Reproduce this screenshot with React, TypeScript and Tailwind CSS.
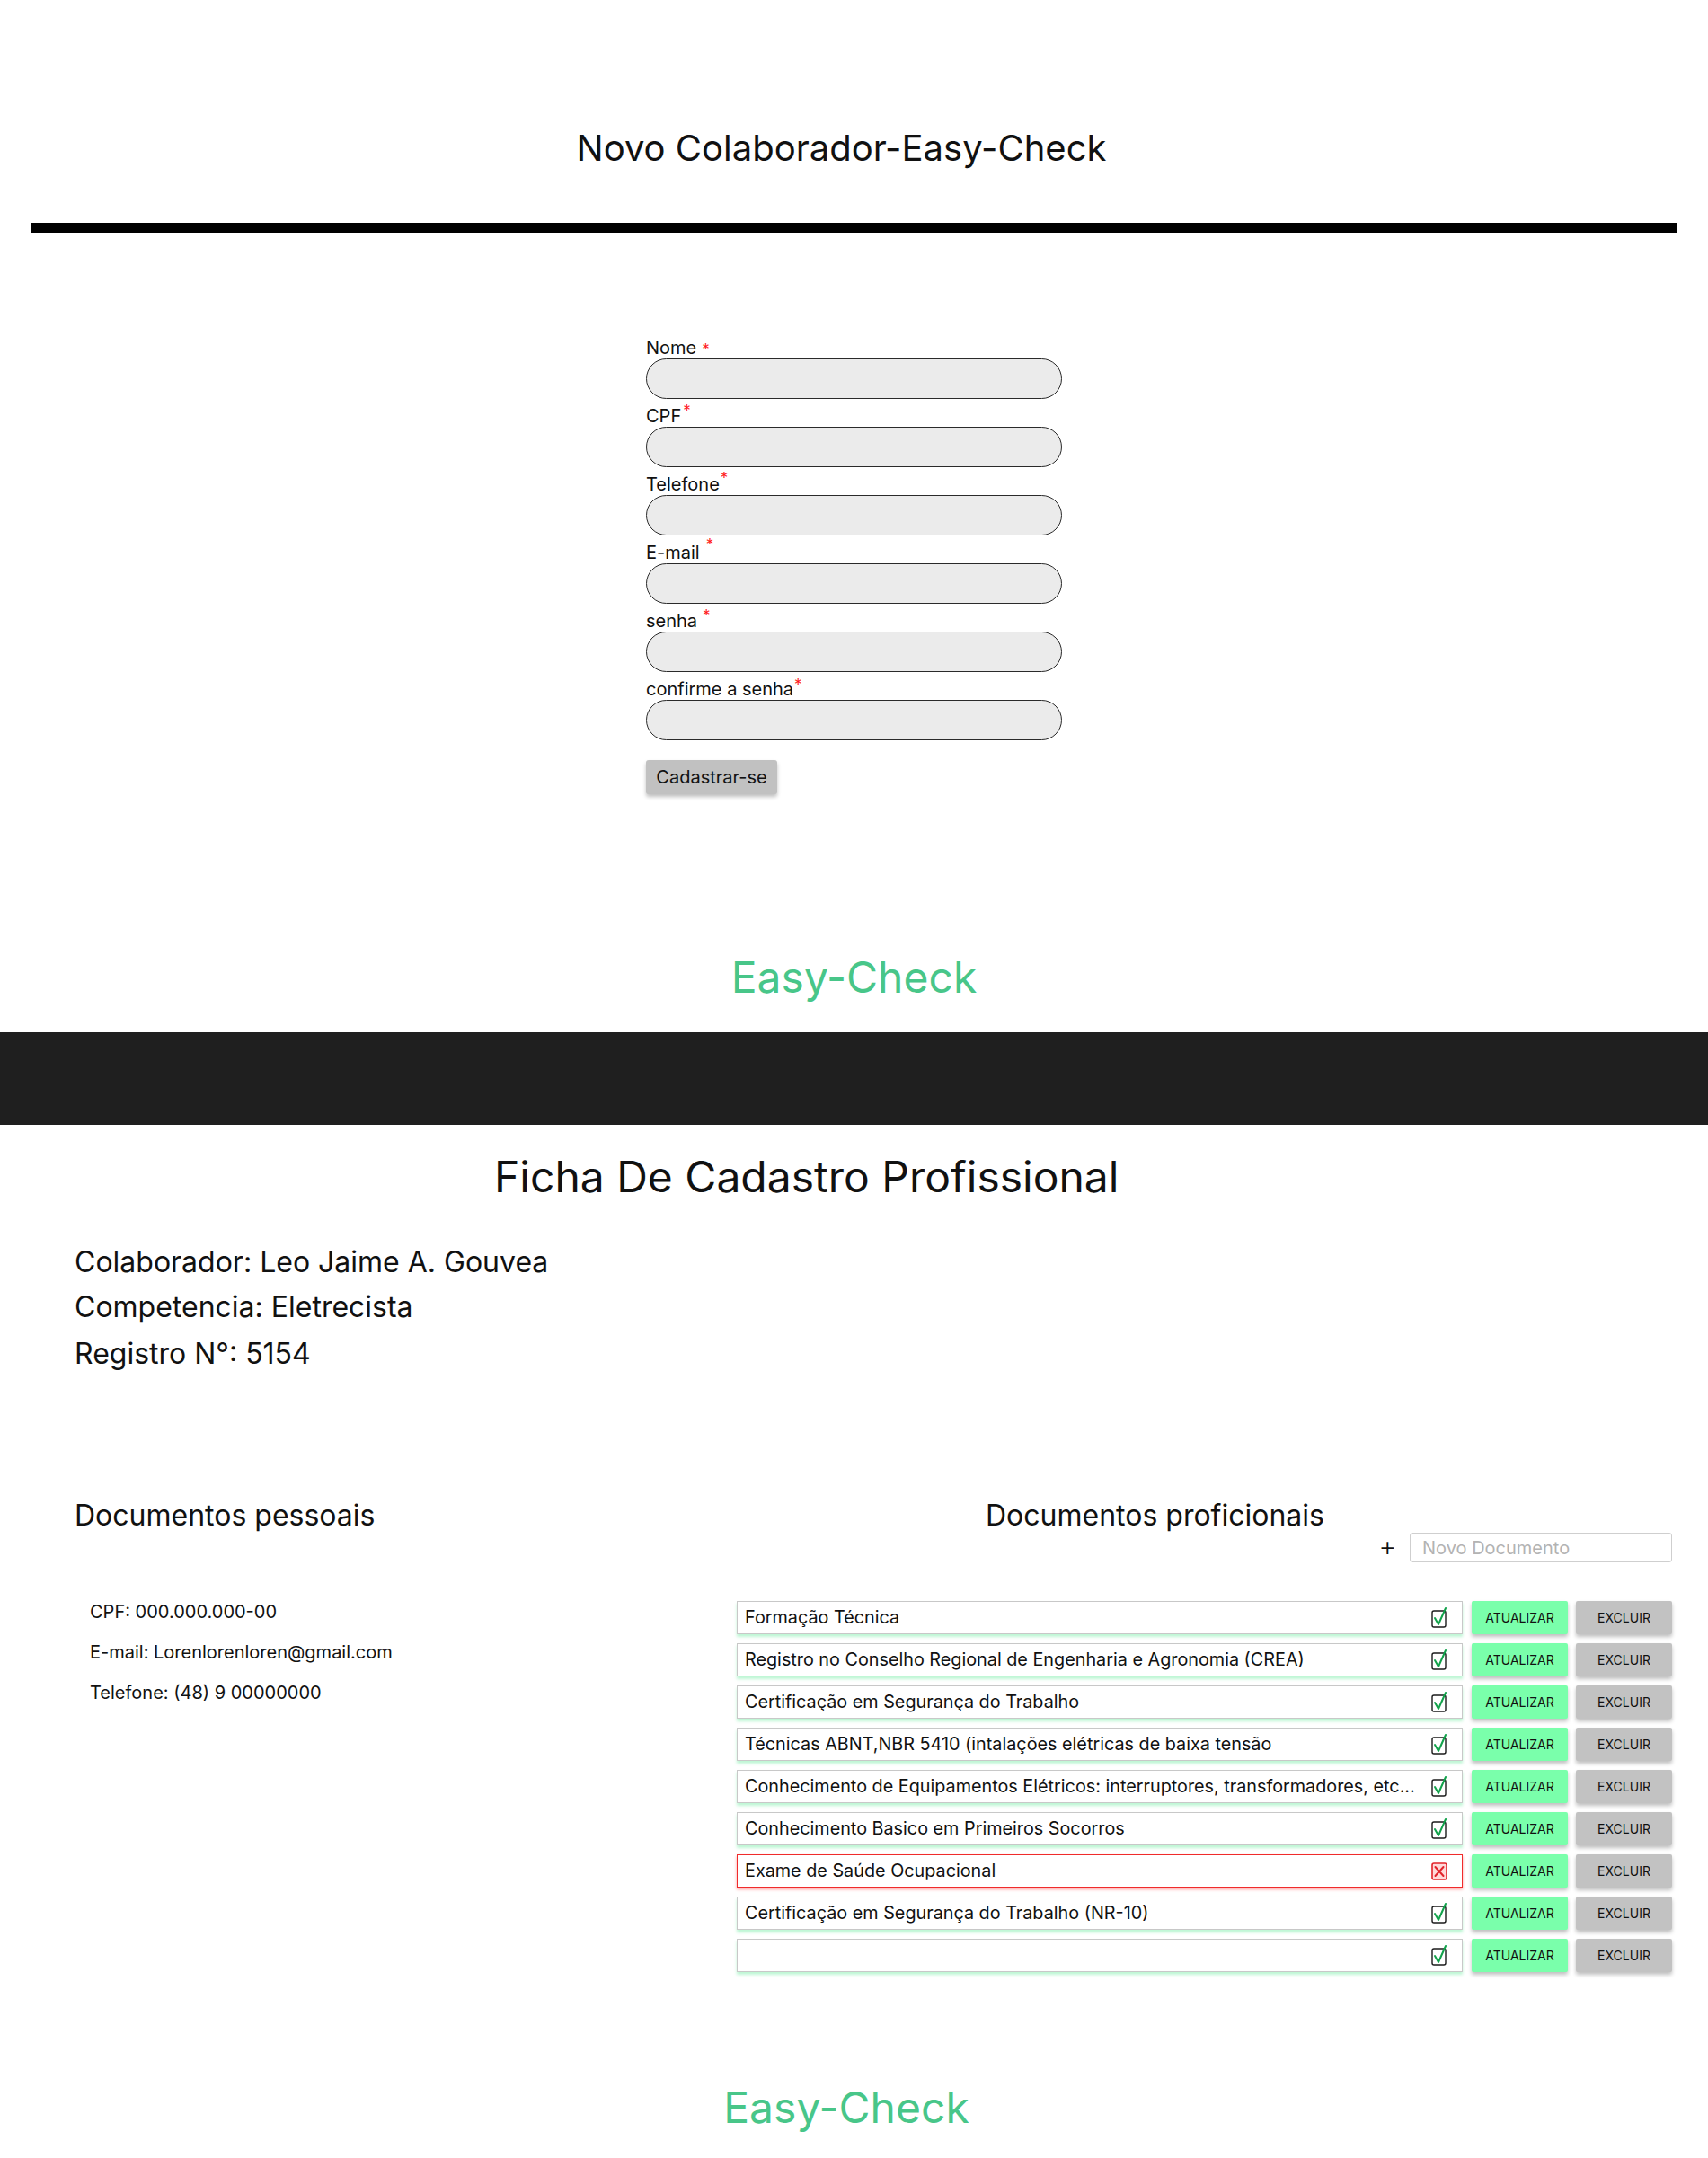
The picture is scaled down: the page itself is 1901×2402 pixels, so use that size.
import React from 'react'

const fields = [
  { label: 'Nome', ast: 'ml-[6px] top-[1px]' },
  { label: 'CPF', ast: 'ml-[2px] -top-[7px]' },
  { label: 'Telefone', ast: 'ml-[1px] -top-[8px]' },
  { label: 'E-mail', ast: 'ml-[7px] -top-[10px]' },
  { label: 'senha', ast: 'ml-[6px] -top-[7px]' },
  { label: 'confirme a senha', ast: 'ml-[1px] -top-[6px]' },
]

const documentos = [
  { nome: 'Formação Técnica', ok: true },
  { nome: 'Registro no Conselho Regional de Engenharia e Agronomia (CREA)', ok: true },
  { nome: 'Certificação em Segurança do Trabalho', ok: true },
  { nome: 'Técnicas ABNT,NBR 5410 (intalações elétricas de baixa tensão', ok: true },
  { nome: 'Conhecimento de Equipamentos Elétricos: interruptores, transformadores, etc...', ok: true },
  { nome: 'Conhecimento Basico em Primeiros Socorros', ok: true },
  { nome: 'Exame de Saúde Ocupacional', ok: false },
  { nome: 'Certificação em Segurança do Trabalho (NR-10)', ok: true },
  { nome: '', ok: true },
]

function CheckIcon() {
  return (
    <svg width="23" height="25" viewBox="0 0 23 25" className="shrink-0">
      <rect x="3" y="5" width="15" height="18" rx="2" fill="white" stroke="#1b1b1b" strokeWidth="1.4" />
      <path d="M6 13 L10 20 L18 2" fill="none" stroke="#12a24b" strokeWidth="2" strokeLinecap="round" strokeLinejoin="round" />
    </svg>
  )
}

function XIcon() {
  return (
    <svg width="23" height="25" viewBox="0 0 23 25" className="shrink-0">
      <rect x="3" y="4" width="16" height="18" rx="2" fill="#ffd9d9" stroke="#e2232a" strokeWidth="1.6" />
      <path d="M6.5 8 L15.5 18 M15.5 8 L6.5 18" fill="none" stroke="#e2232a" strokeWidth="2" strokeLinecap="round" />
    </svg>
  )
}

export default function App() {
  return (
    <div className="min-h-[2402px] bg-white font-['Inter',sans-serif] text-[#111]">
      {/* cadastro */}
      <h1 className="pt-[141px] pr-[28px] text-center text-[40px] leading-[48px] font-normal">Novo Colaborador-Easy-Check</h1>
      <div className="mx-[34px] mt-[59px] h-[11px] bg-black" />

      <form className="mx-auto mt-[116px] w-[463px]">
        {fields.map((f, i) => (
          <div key={f.label} className={i === 0 ? '' : 'mt-[7px]'}>
            <label className="block text-[20px] leading-[24px] text-[#111]">
              {f.label}
              <span className={`relative inline-block text-[17px] leading-none text-[#ff1a1a] ${f.ast}`}>*</span>
            </label>
            <input className="block h-[45px] w-full rounded-full border border-[#2a2a2a] bg-[#ebebeb] px-5 outline-none" />
          </div>
        ))}
        <button
          type="button"
          className="mt-[22px] h-[38px] w-[146px] rounded-[3px] bg-[#c1c1c1] text-[20px] text-[#111] shadow-[0_3px_4px_rgba(0,0,0,0.25)]"
        >
          Cadastrar-se
        </button>
      </form>

      <p className="mt-[175px] text-center text-[48px] leading-[58px] text-[#48c689]">Easy-Check</p>
      <div className="mt-[32px] h-[103px] bg-[#1f1f1f]" />

      {/* ficha */}
      <h2 className="mt-[29px] pl-[550px] text-[48px] leading-[58px] font-normal">Ficha De Cadastro Profissional</h2>

      <div className="mt-[41px] pl-[83px] text-[32px] leading-[50px]">
        <p>Colaborador: Leo Jaime A. Gouvea</p>
        <p>Competencia: Eletrecista</p>
        <p className="mt-[2px]">Registro N°: 5154</p>
      </div>

      <div className="mt-[135px] flex pl-[83px] pr-[40px]">
        <div className="w-[737px] shrink-0">
          <h3 className="text-[32px] leading-[40px] font-normal">Documentos pessoais</h3>
          <ul className="mt-[75px] flex flex-col gap-[21px] pl-[17px] text-[20px] leading-[24px]">
            <li>CPF: 000.000.000-00</li>
            <li>E-mail: Lorenlorenloren@gmail.com</li>
            <li>Telefone: (48) 9 00000000</li>
          </ul>
        </div>

        <div className="flex-1">
          <h3 className="pl-[277px] text-[32px] leading-[40px] font-normal">Documentos proficionais</h3>
          <div className="-mt-[1px] flex items-center justify-end gap-[15px]">
            <span className="relative -top-[2px] text-[30px] leading-none font-light text-[#111]">+</span>
            <input
              placeholder="Novo Documento"
              className="h-[33px] w-[292px] rounded-[3px] border border-[#cfcfcf] px-[13px] text-[20px] outline-none placeholder:text-[#b3b3b3]"
            />
          </div>

          <div className="mt-[43px] flex flex-col gap-[10px]">
            {documentos.map((d, i) => (
              <div key={i} className="flex h-[37px] items-stretch gap-[10px]">
                <div
                  className={
                    d.ok
                      ? 'flex w-[808px] items-center gap-[3px] border border-[#c8c8c8] bg-white pl-[8px] pr-[13px] shadow-[0_3px_3px_rgba(110,235,160,0.45)]'
                      : 'flex w-[808px] items-center gap-[3px] border-[1.5px] border-[#f02b2b] bg-white pl-[8px] pr-[13px] shadow-[0_2px_3px_rgba(255,40,40,0.45)]'
                  }
                >
                  <span className="flex-1 truncate text-[19.8px] text-[#111]">{d.nome}</span>
                  {d.ok ? <CheckIcon /> : <XIcon />}
                </div>
                <button
                  type="button"
                  className="w-[107px] rounded-[2px] bg-[#7affab] text-[14px] text-[#111] shadow-[0_3px_4px_rgba(0,0,0,0.25)]"
                >
                  ATUALIZAR
                </button>
                <button
                  type="button"
                  className="ml-[-1px] w-[107px] rounded-[2px] bg-[#c2c2c2] text-[14px] text-[#111] shadow-[0_3px_4px_rgba(0,0,0,0.25)]"
                >
                  EXCLUIR
                </button>
              </div>
            ))}
          </div>
        </div>
      </div>

      <p className="mt-[122px] pr-[17px] text-center text-[48px] leading-[58px] text-[#48c689]">Easy-Check</p>
    </div>
  )
}
